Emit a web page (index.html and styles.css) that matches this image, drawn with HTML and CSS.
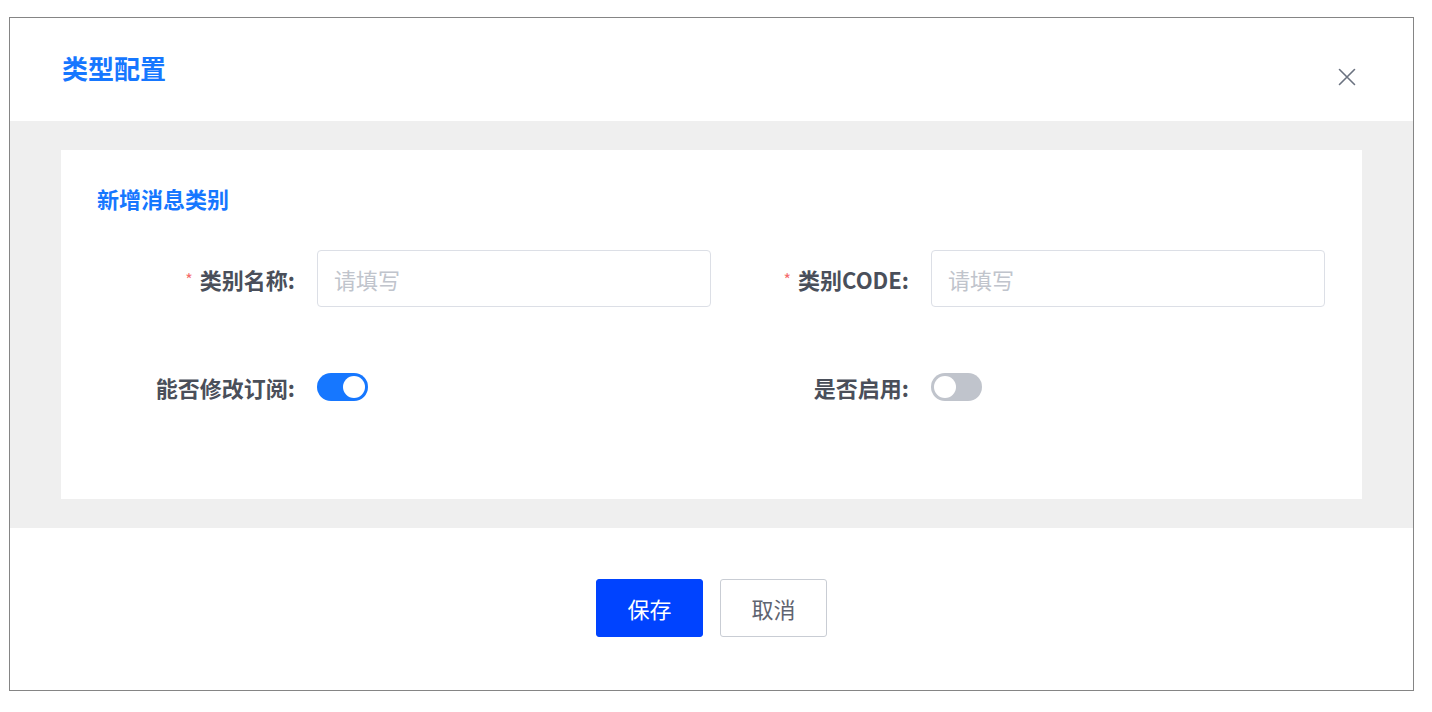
FILE: index.html
```html
<!DOCTYPE html>
<html lang="zh-CN">
<head>
<meta charset="utf-8">
<title>类型配置</title>
<link rel="stylesheet" href="styles.css">
</head>
<body>
<div class="dialog">
  <div class="dialog-header">
    <h2 class="dialog-title">类型配置</h2>
    <button class="close-btn" aria-label="关闭">
      <svg width="18" height="18" viewBox="0 0 18 18"><path d="M1.5 1.5L16.5 16.5M16.5 1.5L1.5 16.5" stroke="#6b7280" stroke-width="1.6" stroke-linecap="round" fill="none"/></svg>
    </button>
  </div>
  <div class="dialog-body">
    <div class="card">
      <h3 class="section-title">新增消息类别</h3>
      <div class="form-row">
        <div class="field">
          <label class="field-label"><span class="req">*</span>类别名称:</label>
          <input class="input" type="text" placeholder="请填写">
        </div>
        <div class="field">
          <label class="field-label"><span class="req">*</span>类别CODE:</label>
          <input class="input" type="text" placeholder="请填写">
        </div>
      </div>
      <div class="form-row">
        <div class="field">
          <label class="field-label">能否修改订阅:</label>
          <span class="switch on"><span class="knob"></span></span>
        </div>
        <div class="field">
          <label class="field-label">是否启用:</label>
          <span class="switch"><span class="knob"></span></span>
        </div>
      </div>
    </div>
  </div>
  <div class="dialog-footer">
    <button class="btn btn-primary">保存</button>
    <button class="btn btn-default">取消</button>
  </div>
</div>
</body>
</html>
```

FILE: styles.css
```css
* { box-sizing: border-box; }
html, body { margin: 0; padding: 0; background: #ffffff; }
body {
  font-family: "Noto Sans CJK SC", "Noto Sans", "Liberation Sans", sans-serif;
  padding: 17px 0 0 9px;
}
.dialog {
  width: 1405px;
  height: 674px;
  border: 1px solid #858585;
  box-shadow: 0 1px 0 #b5b5b5;
  background: #fff;
  display: flex;
  flex-direction: column;
}
.dialog-header {
  height: 103px;
  display: flex;
  align-items: flex-start;
  justify-content: space-between;
  padding: 0 57px 0 52px;
}
.dialog-title {
  margin: 0;
  margin-top: 33px;
  font-size: 26px;
  line-height: 34px;
  font-weight: 700;
  color: #1677ff;
}
.close-btn {
  margin-top: 50px;
  border: 0;
  background: none;
  padding: 0;
  width: 18px;
  height: 18px;
  cursor: pointer;
  display: flex;
}
.dialog-body {
  background: #efefef;
  height: 407px;
  padding: 29px 51px;
}
.card {
  background: #fff;
  height: 349px;
  padding: 32px 36px 0;
}
.section-title {
  margin: 0 0 36px;
  font-size: 22px;
  line-height: 32px;
  font-weight: 700;
  color: #1677ff;
}
.form-row {
  display: flex;
  height: 57px;
  margin-bottom: 51px;
}
.field {
  width: 614px;
  display: flex;
  align-items: center;
}
.field-label {
  width: 220px;
  padding-right: 22px;
  text-align: right;
  font-size: 22px;
  font-weight: 700;
  color: #4a4f5a;
  white-space: nowrap;
}
.req {
  color: #f56c6c;
  font-weight: 400;
  font-size: 16px;
  margin-right: 7px;
  position: relative;
  top: -3px;
}
.input {
  width: 394px;
  height: 57px;
  border: 1px solid #dcdfe6;
  border-radius: 4px;
  padding: 0 16px;
  font-family: inherit;
  font-size: 22px;
  color: #333;
  outline: none;
}
.input::placeholder { color: #c0c4cc; }
.switch {
  width: 51px;
  height: 28px;
  border-radius: 14px;
  background: #c0c4cc;
  display: flex;
  align-items: center;
  padding: 0 3px;
}
.switch.on {
  background: #1677ff;
  justify-content: flex-end;
}
.knob {
  width: 22px;
  height: 22px;
  border-radius: 50%;
  background: #fff;
}
.dialog-footer {
  flex: 1;
  display: flex;
  justify-content: center;
  align-items: flex-start;
  gap: 17px;
  padding-top: 51px;
}
.btn {
  width: 107px;
  height: 58px;
  border-radius: 3px;
  font-family: inherit;
  font-size: 22px;
  cursor: pointer;
}
.btn-primary {
  background: #0043ff;
  border: 1px solid #0043ff;
  color: #fff;
}
.btn-default {
  background: #fff;
  border: 1px solid #c9cdd4;
  color: #5f6470;
}
```
